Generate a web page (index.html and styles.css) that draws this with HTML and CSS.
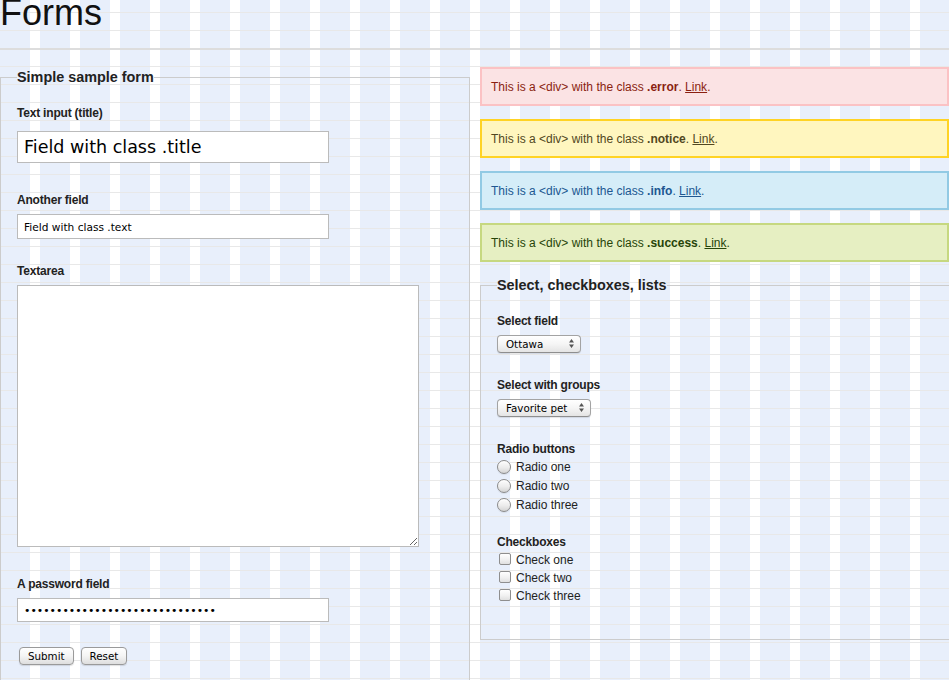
FILE: index.html
```html
<!DOCTYPE html>
<html lang="en">
<head>
<meta charset="utf-8">
<title>Forms</title>
<link rel="stylesheet" href="styles.css">
</head>
<body>
<div class="container">
  <h1 class="page-title">Forms</h1>
  <hr class="rule">
  <div class="columns">
    <div class="col col-left">
      <form class="form-box">
        <fieldset class="box">
          <legend class="box-legend">Simple sample form</legend>
          <div class="field field-title">
            <label class="lbl" for="dummy0">Text input (title)</label>
            <input class="title" type="text" id="dummy0" value="Field with class .title">
          </div>
          <div class="field">
            <label class="lbl" for="dummy1">Another field</label>
            <input class="text" type="text" id="dummy1" value="Field with class .text">
          </div>
          <div class="field field-area">
            <label class="lbl" for="dummy2">Textarea</label>
            <textarea class="area" id="dummy2"></textarea>
          </div>
          <div class="field field-pass">
            <label class="lbl" for="dummy3">A password field</label>
            <input class="text pass" type="password" id="dummy3" value="aaaaaaaaaaaaaaaaaaaaaaaaaaaaaa">
          </div>
          <div class="actions">
            <button class="btn" type="button">Submit</button>
            <button class="btn" type="button">Reset</button>
          </div>
        </fieldset>
      </form>
    </div>
    <div class="col col-right">
      <div class="msg error">This is a &lt;div&gt; with the class <strong>.error</strong>. <a href="#">Link</a>.</div>
      <div class="msg notice">This is a &lt;div&gt; with the class <strong>.notice</strong>. <a href="#">Link</a>.</div>
      <div class="msg info">This is a &lt;div&gt; with the class <strong>.info</strong>. <a href="#">Link</a>.</div>
      <div class="msg success">This is a &lt;div&gt; with the class <strong>.success</strong>. <a href="#">Link</a>.</div>

      <fieldset class="box">
        <legend class="box-legend">Select, checkboxes, lists</legend>
        <div class="field">
          <label class="lbl" for="dummy4">Select field</label>
          <div class="select-wrap sel-city">
            <select class="sel" id="dummy4">
              <option>Ottawa</option>
              <option>Calgary</option>
              <option>Moosejaw</option>
            </select>
            <svg class="sel-arrows" width="5" height="9" viewBox="0 0 5 9"><path d="M2.5 0 L5 3.4 L0 3.4 Z M0 5.6 L5 5.6 L2.5 9 Z" fill="#555"/></svg>
          </div>
        </div>
        <div class="field">
          <label class="lbl" for="dummy5">Select with groups</label>
          <div class="select-wrap sel-pet">
            <select class="sel" id="dummy5">
              <option>Favorite pet</option>
              <optgroup label="mammals">
                <option>dog</option>
                <option>cat</option>
                <option>rabbit</option>
                <option>horse</option>
              </optgroup>
              <optgroup label="reptiles">
                <option>iguana</option>
                <option>snake</option>
              </optgroup>
            </select>
            <svg class="sel-arrows" width="5" height="9" viewBox="0 0 5 9"><path d="M2.5 0 L5 3.4 L0 3.4 Z M0 5.6 L5 5.6 L2.5 9 Z" fill="#555"/></svg>
          </div>
        </div>
        <div class="field">
          <div class="lbl">Radio buttons</div>
          <label class="opt opt-radio"><input class="radio" type="radio" name="example"><span>Radio one</span></label>
          <label class="opt opt-radio"><input class="radio" type="radio" name="example"><span>Radio two</span></label>
          <label class="opt opt-radio"><input class="radio" type="radio" name="example"><span>Radio three</span></label>
        </div>
        <div class="field">
          <div class="lbl">Checkboxes</div>
          <label class="opt opt-check"><input class="check" type="checkbox"><span>Check one</span></label>
          <label class="opt opt-check"><input class="check" type="checkbox"><span>Check two</span></label>
          <label class="opt opt-check"><input class="check" type="checkbox"><span>Check three</span></label>
        </div>
      </fieldset>
    </div>
  </div>
</div>
</body>
</html>
```

FILE: styles.css
```css
html {
  background-color: #ffffff;
  background-image:
    linear-gradient(to bottom, #e8e8e8 1px, transparent 1px),
    linear-gradient(to right, #e8effb 30px, #ffffff 30px);
  background-size: 100% 18px, 40px 100%;
  background-position: 0 12px, 0 0;
  overflow: hidden;
}

body {
  margin: 0;
  overflow: hidden;
  font-family: "Liberation Sans", Arial, Helvetica, sans-serif;
  font-size: 12px;
  line-height: 18px;
  color: #222222;
}

.container {
  width: 950px;
}

.page-title {
  margin: -5px 0 17px;
  font-size: 36px;
  line-height: 36px;
  font-weight: normal;
  color: #111111;
}

.rule {
  margin: 0 0 17px;
  height: 2px;
  border: 0;
  background: #dddddd;
}

.columns {
  display: flex;
  gap: 10px;
  align-items: flex-start;
}

.col-left {
  width: 470px;
  flex: none;
}

.col-right {
  width: 470px;
  flex: none;
}

.form-box {
  margin: 0;
}

.box {
  margin: 0;
  padding: 16px 16px 16px;
  border: 1px solid #cccccc;
  min-width: 0;
}

.box-legend {
  padding: 0;
  font-size: 14.4px;
  line-height: 21px;
  font-weight: bold;
  color: #222222;
}

.field {
  display: flow-root;
  margin-bottom: 18px;
}

.lbl {
  display: block;
  font-weight: bold;
  letter-spacing: -0.2px;
  color: #222222;
}

.title,
.text,
.area {
  display: block;
  box-sizing: border-box;
  border: 1px solid #bbbbbb;
  background: #ffffff;
  color: #000000;
  font-family: "DejaVu Sans", sans-serif;
  outline: none;
}

.title {
  width: 312px;
  height: 32px;
  margin: 9px 0 10px;
  padding: 0 5px 0 6px;
  font-size: 17.5px;
}

.text {
  width: 312px;
  height: 25px;
  margin: 5px 0;
  padding: 0 5px 0 6px;
  font-size: 10.6px;
}

.pass {
  height: 24px;
  font-size: 10.85px;
}

.area {
  width: 402px;
  height: 262px;
  margin: 5px 0 10px;
  padding: 5px;
  font-size: 12px;
}

.actions {
  display: flex;
  gap: 7px;
  padding: 2px 0 0 2px;
}

.btn {
  height: 18px;
  padding: 0 8px;
  border: 1px solid #9a9a9a;
  border-radius: 4px;
  background: linear-gradient(to bottom, #ffffff 0%, #f4f4f4 50%, #dedede 100%);
  font-family: "DejaVu Sans", sans-serif;
  font-size: 10.3px;
  line-height: 16px;
  color: #000000;
  box-shadow: 0 1px 1px rgba(0, 0, 0, 0.12);
}

.msg {
  padding: 8.7px 9px;
  margin: 0 1px 12.6px 0;
  border: 2px solid #dddddd;
}

.msg a {
  color: inherit;
  text-decoration: underline;
}

.error {
  background: #fbe3e4;
  color: #8a1f11;
  border-color: #fbc2c4;
}

.notice {
  background: #fff6bf;
  color: #514721;
  border-color: #ffd324;
}

.info {
  background: #d5edf8;
  color: #205791;
  border-color: #92cae4;
}

.success {
  background: #e6efc2;
  color: #264409;
  border-color: #c6d880;
}

.select-wrap {
  position: relative;
  margin: 5px 0;
  height: 18px;
}

.sel-city {
  width: 84px;
}

.sel-pet {
  width: 94px;
}

.sel {
  -webkit-appearance: none;
  appearance: none;
  display: block;
  box-sizing: border-box;
  width: 100%;
  height: 18px;
  margin: 0;
  padding: 0 0 0 8px;
  border: 1px solid #a3a3a3;
  border-bottom-color: #8e8e8e;
  border-radius: 4px;
  background: linear-gradient(to bottom, #ffffff 0%, #f5f5f5 50%, #e4e4e4 100%);
  font-family: "DejaVu Sans", sans-serif;
  font-size: 10.3px;
  line-height: 16px;
  color: #000000;
  box-shadow: 0 1px 1px rgba(0, 0, 0, 0.1);
  outline: none;
}

.sel-arrows {
  position: absolute;
  right: 7px;
  top: 4px;
  pointer-events: none;
}

.opt {
  display: flex;
  align-items: center;
  font-weight: normal;
  color: #222222;
}

.opt-radio {
  height: 19px;
}

.opt-check {
  height: 18px;
}

.radio {
  -webkit-appearance: none;
  appearance: none;
  box-sizing: border-box;
  width: 14px;
  height: 14px;
  margin: 0 5px 0 0;
  border: 1px solid #8a8a8a;
  border-radius: 50%;
  background: linear-gradient(to bottom, #fdfdfd 0%, #ececec 55%, #d4d4d4 100%);
  box-shadow: inset 0 1px 1px rgba(255, 255, 255, 0.8), 0 1px 1px rgba(0, 0, 0, 0.08);
}

.check {
  -webkit-appearance: none;
  appearance: none;
  box-sizing: border-box;
  width: 12px;
  height: 12px;
  margin: 0 5px 0 2px;
  border: 1px solid #8e8e8e;
  border-radius: 2px;
  background: linear-gradient(to bottom, #ffffff 0%, #f1f1f1 55%, #e0e0e0 100%);
  position: relative;
  top: -1px;
}
```
